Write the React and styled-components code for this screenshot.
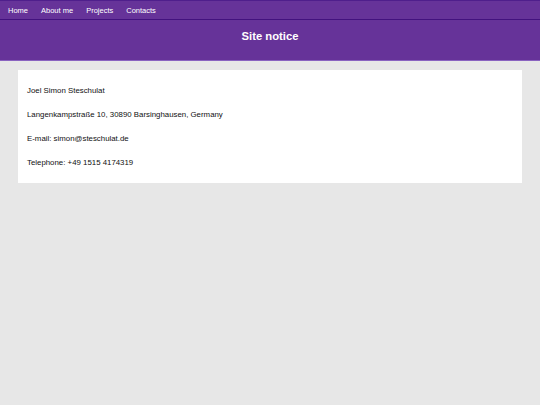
import React from "react";
import styled, { createGlobalStyle } from "styled-components";

const GlobalStyle = createGlobalStyle`
  html, body {
    margin: 0;
    padding: 0;
    background: #e7e7e7;
    font-family: "Liberation Sans", Arial, sans-serif;
  }
`;

const Nav = styled.nav`
  height: 20px;
  box-sizing: border-box;
  border-top: 1px solid #4f1f8c;
  border-bottom: 1px solid #43127e;
  background: #663399;
  display: flex;
  align-items: center;
  gap: 13px;
  padding-left: 8px;
  a {
    color: #ffffff;
    text-decoration: none;
    font-size: 7.5px;
  }
`;

const Header = styled.header`
  height: 41px;
  box-sizing: border-box;
  background: #663399;
  border-bottom: 1px solid #8a63c0;
  padding-top: 10px;
  text-align: center;
`;

const Title = styled.h1`
  margin: 0;
  color: #ffffff;
  font-size: 11.25px;
  font-weight: bold;
`;

const Main = styled.main`
  padding: 9px 18px;
`;

const Card = styled.section`
  background: #ffffff;
  padding: 9px 9px 8px;
`;

const Line = styled.p`
  margin: 0;
  line-height: 24px;
  font-size: 7.85px;
  color: #111111;
`;

export default function App() {
  return (
    <>
      <GlobalStyle />
      <Nav>
        <a href="#">Home</a>
        <a href="#">About me</a>
        <a href="#">Projects</a>
        <a href="#">Contacts</a>
      </Nav>
      <Header>
        <Title>Site notice</Title>
      </Header>
      <Main>
        <Card>
          <Line>Joel Simon Steschulat</Line>
          <Line>Langenkampstraße 10, 30890 Barsinghausen, Germany</Line>
          <Line>E-mail: simon@steschulat.de</Line>
          <Line>Telephone: +49 1515 4174319</Line>
        </Card>
      </Main>
    </>
  );
}
